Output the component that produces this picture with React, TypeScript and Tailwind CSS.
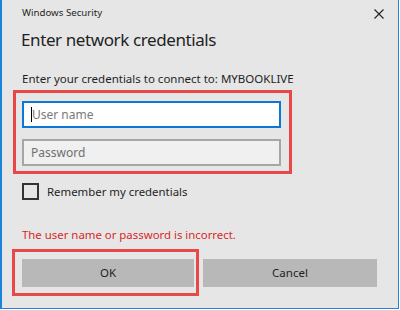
import React from "react";

export default function App() {
  return (
    <div className="w-[400px] h-[310px] bg-white font-['Noto_Sans',sans-serif] text-[#1f1f1f]">
      <div className="w-[399px] h-[309px] bg-[#e6e6e6] border-l-2 border-r border-b border-[#1a84d9] flex flex-col pl-[20px] pr-[20px]">
        <div className="flex items-start justify-between h-[24px] pt-[6px]">
          <span className="text-[9.7px] leading-[14px]">Windows Security</span>
          <svg width="10" height="10" viewBox="0 0 10 10" className="mt-[3px] mr-[-6px]">
            <path d="M0.5 0.5 L9.5 9.5 M9.5 0.5 L0.5 9.5" stroke="#222" strokeWidth="1.1" />
          </svg>
        </div>
        <div className="text-[17px] leading-[24px] tracking-[-0.4px] mt-[4px] ml-[-1px]">Enter network credentials</div>
        <div className="text-[11.5px] leading-[16px] mt-[19px]">Enter your credentials to connect to: MYBOOKLIVE</div>
        <div className="mt-[3px] ml-[-9px] w-[279px] border-[3px] border-[#e84848] pt-[8px] pb-[5px] pl-[6px] flex flex-col gap-[11px]">
          <div className="w-[259px] h-[27px] bg-white border-2 border-[#0a78d7] flex items-center pl-[7px]">
            <span className="w-px h-[15px] bg-black"></span>
            <span className="text-[12px] text-[#7a7a7a]">User name</span>
          </div>
          <div className="w-[259px] h-[27px] bg-[#f0f0f0] border-2 border-[#a6a6a6] flex items-center pl-[7px]">
            <span className="text-[12px] text-[#6f6f6f]">Password</span>
          </div>
        </div>
        <div className="flex items-center mt-[9px] h-[17px]">
          <span className="w-[17px] h-[17px] border-2 border-[#333] bg-transparent"></span>
          <span className="ml-[8px] text-[11.4px] leading-[16px]">Remember my credentials</span>
        </div>
        <div className="mt-[27px] text-[11.4px] leading-[16px] text-[#d9262a]">The user name or password is incorrect.</div>
        <div className="flex items-start mt-[6px] ml-[-10px]">
          <div className="w-[187px] h-[47px] border-[3px] border-[#e84848] pt-[7px] pl-[7px]">
            <div className="w-[172px] h-[28px] bg-[#b8b8b8] flex items-center justify-center text-[11.5px]">OK</div>
          </div>
          <div className="ml-[4px] mt-[10px] w-[174px] h-[28px] bg-[#b8b8b8] flex items-center justify-center text-[11.5px]">Cancel</div>
        </div>
      </div>
    </div>
  );
}
